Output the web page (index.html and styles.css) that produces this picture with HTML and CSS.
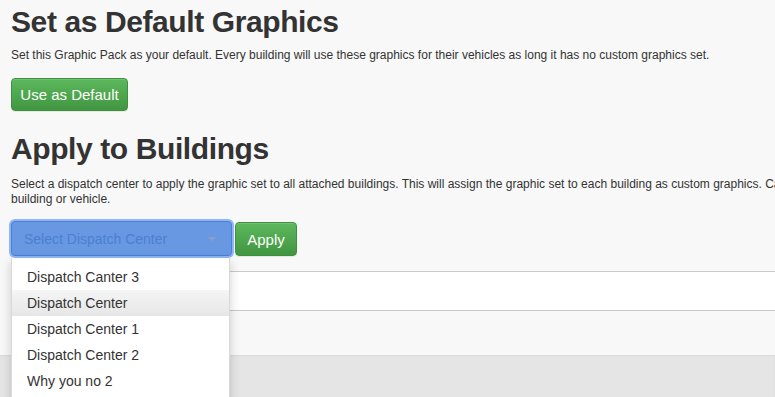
FILE: index.html
```html
<!DOCTYPE html>
<html lang="en">
<head>
<meta charset="UTF-8" />
<meta name="viewport" content="width=device-width, initial-scale=1" />
<title>Graphic Pack</title>
<link rel="stylesheet" href="styles.css">
</head>
<body>
  <div class="page">
    <section class="block">
      <h1>Set as Default Graphics</h1>
      <p>Set this Graphic Pack as your default. Every building will use these graphics for their vehicles as long it has no custom graphics set.</p>
      <button class="btn btn-success btn-default-set">Use as Default</button>
    </section>

    <section class="block">
      <h1>Apply to Buildings</h1>
      <p class="wide">Select a dispatch center to apply the graphic set to all attached buildings. This will assign the graphic set to each building as custom graphics. Can be changed later on each building or vehicle.</p>
      <div class="assign">
        <div class="select-wrap">
          <div class="select is-open">
            <span class="placeholder">Select Dispatch Center</span>
            <span class="caret"></span>
          </div>
          <ul class="select-menu">
            <li>Dispatch Canter 3</li>
            <li class="active">Dispatch Center</li>
            <li>Dispatch Center 1</li>
            <li>Dispatch Center 2</li>
            <li>Why you no 2</li>
          </ul>
        </div>
        <button class="btn btn-success btn-apply">Apply</button>
      </div>
    </section>

    <table class="list">
      <tr><td>&nbsp;</td></tr>
    </table>

    <div class="actions">
      <button class="btn btn-success btn-small">Save</button>
    </div>
  </div>
  <footer class="footer"></footer>
</body>
</html>
```

FILE: styles.css
```css
* {
  box-sizing: border-box;
}
html, body {
  margin: 0;
  height: 100%;
}
body {
  font-family: 'Liberation Sans', Arial, sans-serif;
  background: #e5e5e5;
  color: #333;
  overflow: hidden;
}
.page {
  background: #f8f8f8;
  padding: 5px 0 3px 11px;
  width: 1000px;
}
h1 {
  margin: 0;
  font-size: 30px;
  line-height: 33px;
  font-weight: bold;
  color: #333;
  letter-spacing: -0.4px;
}
p {
  margin: 0;
  font-size: 12px;
  line-height: 15px;
}
.block p {
  margin-top: 10px;
}
.block p.wide {
  width: 935px;
  margin-top: 12px;
}
.block + .block {
  margin-top: 21px;
}

/* Buttons */
.btn {
  font-family: inherit;
  font-size: 15px;
  color: #fff;
  border-radius: 4px;
  cursor: pointer;
  padding: 0 12px;
  white-space: nowrap;
}
.btn-success {
  background: linear-gradient(to bottom, #5cb85c 0%, #419641 100%);
  border: 1px solid #3e8f3e;
  box-shadow: inset 0 1px 0 rgba(255,255,255,0.15), 0 1px 1px rgba(0,0,0,0.075);
}
.btn-default-set {
  margin-top: 15px;
  height: 33px;
  width: 117px;
  padding: 0;
}

/* Assign row */
.assign {
  display: flex;
  align-items: flex-start;
  gap: 3px;
  margin-top: 14px;
}
.select-wrap {
  position: relative;
  width: 221px;
}
.select {
  height: 35px;
  display: flex;
  align-items: center;
  justify-content: space-between;
  padding: 0 12px 0 12px;
  background: #6898e2;
  border: 1px solid #4a80d6;
  border-radius: 4px;
  box-shadow: 0 0 0 2px rgba(110, 160, 245, 0.75);
  font-size: 14px;
}
.placeholder {
  color: #4c7fcf;
}
.caret {
  width: 0;
  height: 0;
  border-left: 4px solid transparent;
  border-right: 4px solid transparent;
  border-top: 4px solid #8b9fc3;
  margin-right: 3px;
}
.select-menu {
  position: absolute;
  top: 37px;
  left: 0;
  width: 219px;
  height: 150px;
  margin: 0;
  padding: 6px 0 0;
  list-style: none;
  background: #fff;
  border: 1px solid rgba(0,0,0,0.15);
  border-top: none;
  box-shadow: 0 4px 10px rgba(0,0,0,0.18);
  z-index: 10;
}
.select-menu li {
  padding: 0 15px;
  line-height: 26px;
  font-size: 14px;
  color: #333;
  white-space: nowrap;
}
.select-menu li.active {
  background: linear-gradient(to bottom, #f5f5f5 0%, #e6e6e6 100%);
}
.btn-apply {
  margin-top: 1px;
  height: 34px;
  width: 62px;
  padding: 0;
}

/* List table */
.list {
  width: 100%;
  margin-top: 15px;
  border-collapse: collapse;
}
.list td {
  background: #fff;
  border-top: 1px solid #c9c9c9;
  border-bottom: 1px solid #c9c9c9;
  height: 39px;
  padding: 0;
  font-size: 14px;
}
.actions {
  padding-top: 11px;
}
.btn-small {
  height: 30px;
  width: 60px;
  font-size: 13px;
}
.footer {
  height: 60px;
  background: #e5e5e5;
  box-shadow: inset 0 1px 2px rgba(0,0,0,0.05);
}
```
